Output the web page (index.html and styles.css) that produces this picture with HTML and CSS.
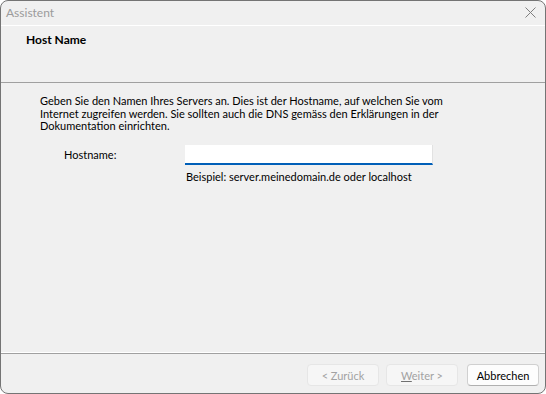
FILE: index.html
```html
<!DOCTYPE html>
<html lang="de">
<head>
  <meta charset="UTF-8" />
  <title>Assistent</title>
  <link rel="stylesheet" href="styles.css">
</head>
<body>
  <div class="window">
    <div class="titlebar">
      <span class="title">Assistent</span>
      <svg class="close" width="11" height="11" viewBox="0 0 11 11">
        <path d="M0.5 0.5 L10.5 10.5 M10.5 0.5 L0.5 10.5" stroke="#7f7f7f" stroke-width="1" fill="none" />
      </svg>
    </div>

    <div class="header">
      <h3>Host Name</h3>
    </div>

    <main class="content">
      <p class="intro">Geben Sie den Namen Ihres Servers an. Dies ist der Hostname, auf welchen Sie vom Internet zugreifen werden. Sie sollten auch die DNS gemäss den Erklärungen in der Dokumentation einrichten.</p>

      <div class="field">
        <label for="hostname">Hostname:</label>
        <div class="field-input">
          <input type="text" id="hostname" />
          <span class="hint">Beispiel: server.meinedomain.de oder localhost</span>
        </div>
      </div>
    </main>

    <footer class="footer">
      <button disabled>&lt; Zurück</button>
      <button disabled><u>W</u>eiter &gt;</button>
      <button class="cancel">Abbrechen</button>
    </footer>
  </div>
</body>
</html>
```

FILE: styles.css
```css
* {
  box-sizing: border-box;
}

html, body {
  margin: 0;
  height: 100%;
}

body {
  font-family: Lato, 'Liberation Sans', sans-serif;
  font-size: 11px;
  color: #000;
  background: #ffffff;
}

.window {
  height: 394px;
  width: 546px;
  display: flex;
  flex-direction: column;
  background: #f0f0f0;
  border: 1px solid #747474;
  border-radius: 8px;
  overflow: hidden;
}

.titlebar {
  height: 25px;
  flex: none;
  display: flex;
  align-items: center;
  justify-content: space-between;
  padding: 0 9px 1px 5px;
  border-bottom: 1px solid #ffffff;
}

.title {
  font-size: 12px;
  color: #9b9b9b;
}

.header {
  height: 57px;
  flex: none;
  padding: 7px 25px;
  border-bottom: 1px solid #a0a0a0;
}

.header h3 {
  margin: 0;
  font-size: 12px;
  line-height: 13px;
  font-weight: 700;
}

.content {
  flex: 1;
  padding: 12px 39px 0;
  border-bottom: 1px solid #ffffff;
}

.intro {
  margin: 0;
  width: 420px;
  line-height: 12.7px;
}

.field {
  display: flex;
  margin-top: 12px;
}

.field label {
  width: 145px;
  padding-left: 24px;
  line-height: 20px;
}

.field-input {
  display: flex;
  flex-direction: column;
}

.field-input input {
  width: 248px;
  height: 20px;
  margin: 0;
  padding: 0 4px;
  border: none;
  border-right: 1px solid #e2e2e2;
  border-bottom: 2px solid #005fb8;
  background: #ffffff;
  font: inherit;
  outline: none;
}

.hint {
  margin-top: 5px;
  padding-left: 1px;
  line-height: 13px;
}

.footer {
  height: 40px;
  flex: none;
  display: flex;
  justify-content: flex-end;
  gap: 7px;
  padding: 10px 6px 0 0;
  border-top: 1px solid #a0a0a0;
}

button {
  width: 72px;
  height: 22px;
  margin: 0;
  padding: 0;
  font: inherit;
  color: #000;
  background: #fdfdfd;
  border: 1px solid #d0d0d0;
  border-bottom-color: #b0b0b0;
  border-radius: 4px;
}

button:disabled {
  color: #a2a2a2;
  background: #f6f6f6;
  border-color: #e6e6e6;
}

button.cancel {
  margin-left: 2px;
}

button u {
  text-decoration-color: #707070;
}
```
